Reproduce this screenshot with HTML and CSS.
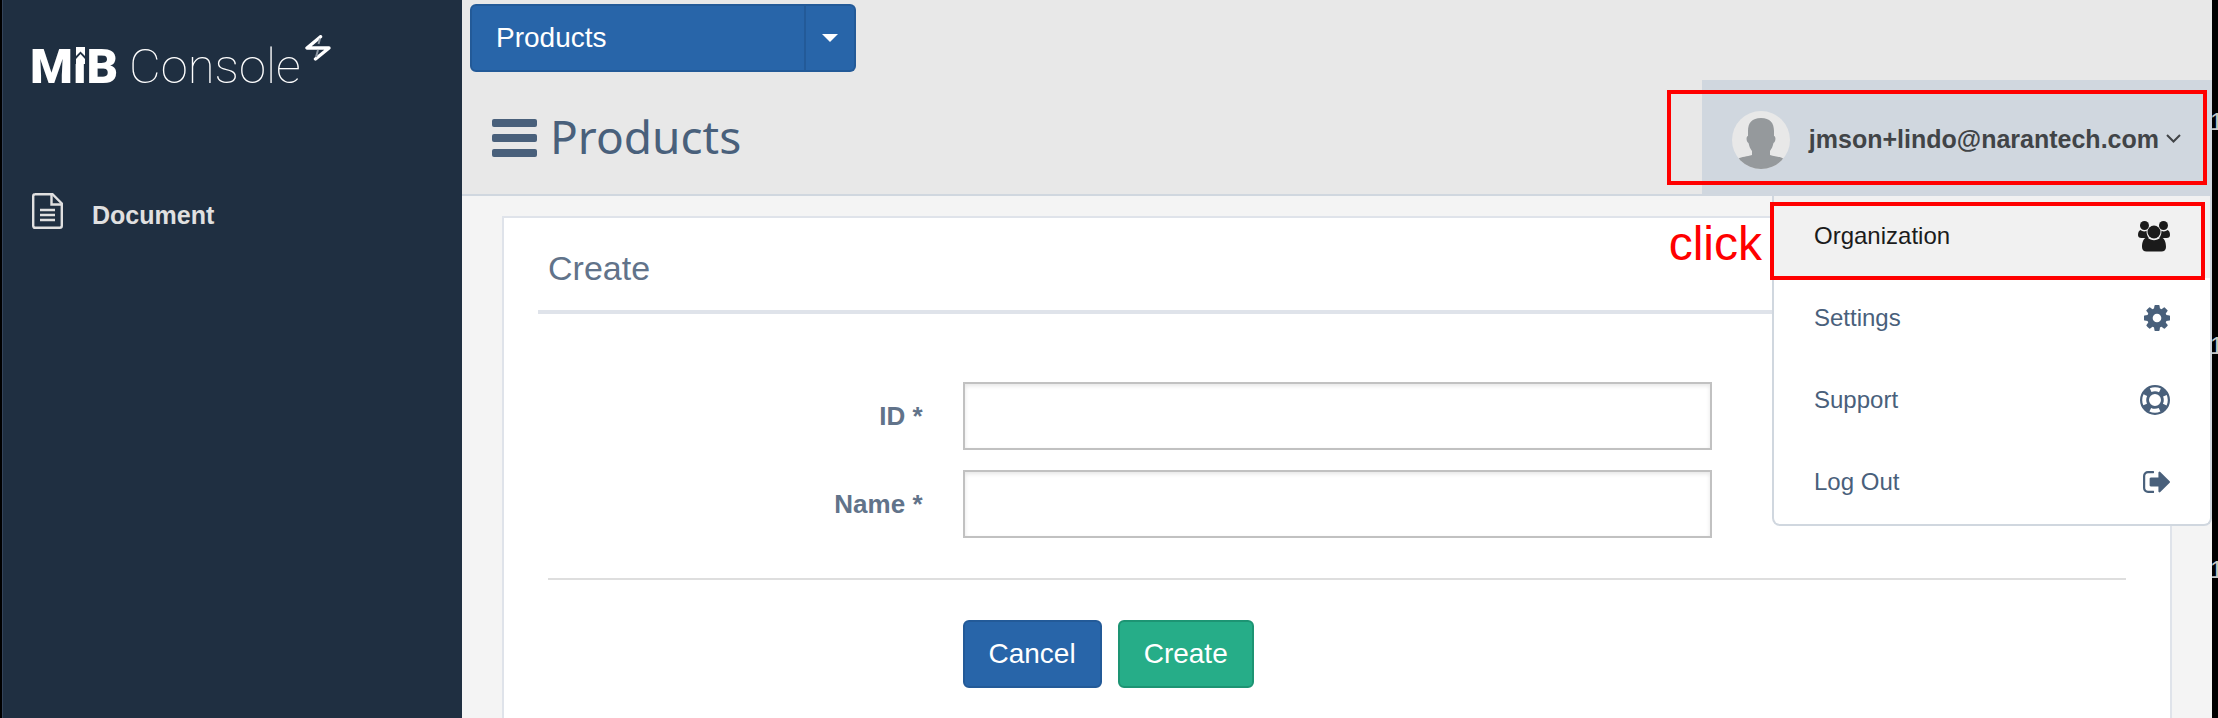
FILE: index.html
```html
<!DOCTYPE html>
<html lang="en">
<head>
<meta charset="utf-8">
<title>MiB Console</title>
<link rel="stylesheet" href="styles.css">
</head>
<body>
<div class="app">
  <aside class="sidebar">
    <a class="logo" href="#"><span class="logo-bold">MiB<svg class="logo-notch" viewBox="0 0 14 18"><path d="M0 0h14v18H0z" fill="#1f2f41"/><path d="M3 1h9v9L7.500 5.500 3 10zM7.500 8l4.500 5v5H3v-5z" fill="#fff"/></svg></span><span class="logo-thin">Console</span><svg class="logo-bolt" viewBox="0 0 26 26"><path d="M15.500 1.700 2 13H24L10.500 24" fill="none" stroke="#fff" stroke-width="3.400" stroke-linejoin="round" stroke-linecap="round"/><path d="M15 3.500 13.500 9M11 22l2-7" fill="none" stroke="#8d97a2" stroke-width="2"/></svg></a>
    <nav>
      <a class="nav-link" href="#"><svg class="doc-icon" viewBox="0 0 31 36"><g fill="none" stroke="#e0e0e0" stroke-width="2.400"><path d="M3 1.200h17.500l9.300 9.300v22.300q0 2-2 2H3.200q-2 0-2-2V3.200q0-2 2-2z"/><path d="M19.500 1v10.500H30"/><path d="M8 17h15M8 22h15M8 27h15"/></g></svg><span>Document</span></a>
    </nav>
  </aside>

  <main class="main">
    <header class="header">
      <div class="split">
        <button class="split-label" type="button">Products</button><button class="split-caret" type="button" aria-label="More"><svg viewBox="0 0 16 8"><path d="M0 0h16L8 8z" fill="#fff"/></svg></button>
      </div>
      <div class="title-row">
        <h1 class="title"><svg class="burger" viewBox="0 0 45 38"><g fill="#49607b"><rect y="0" width="45" height="8" rx="2"/><rect y="15" width="45" height="8" rx="2"/><rect y="30" width="45" height="8" rx="2"/></g></svg><span>Products</span></h1>
        <div class="user">
          <button class="user-button" type="button">
            <svg class="avatar" viewBox="0 0 58 58"><defs><clipPath id="face"><circle cx="29" cy="29" r="29"/></clipPath></defs><g clip-path="url(#face)"><rect width="58" height="58" fill="#e8e8e8"/><path d="M29 7c9 0 13 5 13 13v5c2 0 2 6-.500 7-1 4-1.500 5-3.500 8v4c5 2 10 1 14 4v10H6V48c4-3 9-2 14-4v-4c-2-3-2.500-4-3.500-8-2.500-1-2.500-7-.500-7v-5c0-8 4-13 13-13z" fill="#95999c"/></g></svg>
            <span>jmson+lindo@narantech.com</span>
            <svg class="chevron" viewBox="0 0 15 9"><path d="M1 1l6.500 6.500L14 1" fill="none" stroke="#414447" stroke-width="2"/></svg>
          </button>
          <span class="mark mark-user"></span>
          <div class="menu">
            <a class="menu-item active" href="#">Organization<svg class="i-users" viewBox="0 0 32 31"><g fill="#1b1b1b"><circle cx="6.500" cy="4.500" r="4.500"/><circle cx="25.500" cy="4.500" r="4.500"/><path d="M2.500 9c1.500 1.500 4.500 2 6 .700 0 3 .8 5.300 2.300 7.300H3.500Q0 17 0 14q0-4 2.500-5zM29.500 9c-1.500 1.500-4.500 2-6 .700 0 3-.8 5.300-2.300 7.300h7.300q3.500 0 3.500-3 0-4-2.500-5z"/><circle cx="16" cy="11" r="6.500"/><path d="M9.500 16.500c4 3.500 9 3.500 13 0 4 0 5.500 5 5.500 9.500 0 3-2 4.500-4.500 4.500h-15C6 30.500 4 29 4 26c0-4.500 1.500-9.500 5.500-9.500z"/></g></svg></a>
            <a class="menu-item" href="#">Settings<svg class="i-cog" viewBox="128 128 1536 1536"><path fill="#49607b" d="M1152 896q0-106-75-181t-181-75-181 75-75 181 75 181 181 75 181-75 75-181zm512-109v222q0 12-8 23t-20 13l-185 28q-19 54-39 91 35 50 107 138 10 12 10 25t-9 23q-27 37-99 108t-94 71q-12 0-26-9l-138-108q-44 23-91 38-16 136-29 186-7 28-36 28h-222q-14 0-24.500-8.500t-11.500-21.500l-28-184q-49-16-90-37l-141 107q-10 9-25 9-14 0-25-11-126-114-165-168-7-10-7-23 0-12 8-23 15-21 51-66.500t54-70.500q-27-50-41-99l-183-27q-13-2-21-12.500t-8-23.500v-222q0-12 8-23t19-13l186-28q14-46 39-92-40-57-107-138-10-12-10-24 0-10 9-23 26-36 98.500-107.500t94.500-71.500q13 0 26 10l138 107q44-23 91-38 16-136 29-186 7-28 36-28h222q14 0 24.500 8.500t11.500 21.500l28 184q49 16 90 37l142-107q9-9 24-9 13 0 25 10 129 119 165 170 7 8 7 22 0 12-8 23-15 21-51 66.500t-54 70.500q26 50 41 98l183 28q13 2 21 12.500t8 23.500z"/></svg></a>
            <a class="menu-item" href="#">Support<svg class="i-ring" viewBox="0 0 30 30"><g fill="none"><circle cx="15" cy="15" r="10.500" stroke="#49607b" stroke-width="9"/><circle cx="15" cy="15" r="10.800" stroke="#fff" stroke-width="4" stroke-dasharray="9.600 7.365" stroke-dashoffset="4.800"/></g></svg></a>
            <a class="menu-item" href="#">Log Out<svg class="i-out" viewBox="64 256 1568 1280"><path fill="#49607b" d="M704 1440q0 4 1 20t.5 26.500-3 23.500-10 19.500-20.500 6.500h-320q-119 0-203.500-84.500t-84.500-203.500v-704q0-119 84.500-203.500t203.500-84.500h320q13 0 22.500 9.500t9.500 22.500q0 4 1 20t.5 26.500-3 23.500-10 19.500-20.500 6.500h-320q-66 0-113 47t-47 113v704q0 66 47 113t113 47h312l11.500 1 11.500 3 8 5.500 7 9 2 13.500zm928-544q0 26-19 45l-544 544q-19 19-45 19t-45-19-19-45v-288h-448q-26 0-45-19t-19-45v-384q0-26 19-45t45-19h448v-288q0-26 19-45t45-19 45 19l544 544q19 19 19 45z"/></svg></a>
            <span class="mark mark-item"></span>
            <span class="click">click</span>
          </div>
        </div>
      </div>
    </header>

    <section class="card">
      <h2 class="card-title">Create</h2>
      <form class="form">
        <div class="row"><label for="id">ID *</label><input id="id" type="text"></div>
        <div class="row"><label for="name">Name *</label><input id="name" type="text"></div>
        <div class="actions"><button class="btn" type="button">Cancel</button><button class="btn btn-green" type="button">Create</button></div>
      </form>
    </section>
  </main>

  <div class="edge"><span>1</span><span>1</span><span>1</span></div>
</div>
</body>
</html>
```
FILE: styles.css
```css
* { box-sizing: border-box; }
body {
  margin: 0;
  background: #000;
  font-family: "Liberation Sans", Arial, sans-serif;
  font-size: 24px;
  color: #61738a;
}
a { color: inherit; text-decoration: none; }
button { font: inherit; cursor: pointer; }
svg { display: block; flex: none; }
h1, h2 { margin: 0; font-weight: 400; }

.app { display: flex; min-height: 100vh; padding-left: 2px; overflow: hidden; }

.sidebar {
  flex: none;
  width: 460px;
  padding: 35px 29px;
  background: #1f2f41;
  border-left: 1px solid #34445a;
}
.logo {
  display: flex;
  align-items: flex-start;
  height: 64px;
  color: #fff;
  font-family: Roboto, sans-serif;
  font-size: 49px;
  line-height: 64px;
}
.logo-bold { position: relative; margin-left: -2px; font-weight: 900; }
.logo-notch { position: absolute; left: 43px; top: 11px; width: 14px; height: 18px; }
.logo-thin { margin-left: 11px; font-weight: 100; }
.logo-bolt { width: 26px; height: 26px; margin-left: 4px; }

nav { margin-top: 94px; }
.nav-link {
  display: flex;
  gap: 29px;
  color: #e0e0e0;
  font-size: 25px;
  font-weight: 700;
  line-height: 44px;
}
.doc-icon { width: 31px; height: 36px; }

.main { flex: 1; min-width: 0; background: #f4f4f4; }
.header { padding-top: 4px; background: #e8e8e8; border-bottom: 2px solid #d0d7df; }

.split { display: flex; width: 386px; height: 68px; margin-left: 8px; }
.split button, .btn {
  border: 2px solid #235a98;
  background: #2865a9;
  color: #fff;
  font-size: 28px;
}
.split .split-label { flex: 1; padding: 0 24px; text-align: left; border-radius: 6px 0 0 6px; }
.split .split-caret {
  display: grid;
  place-items: center;
  width: 50px;
  padding: 0;
  border-left: 0;
  border-radius: 0 6px 6px 0;
}
.split-caret svg { width: 16px; height: 8px; }

.title-row { display: flex; justify-content: space-between; margin-top: 8px; height: 114px; }
.title {
  display: flex;
  align-items: center;
  gap: 13px;
  height: 116px;
  padding-left: 30px;
  color: #49607b;
  font-family: "Noto Sans", sans-serif;
  font-size: 46px;
}
.title span { padding-bottom: 4px; }
.burger { width: 45px; height: 38px; }

.user { position: relative; height: 116px; background: #d0d7df; }
.user-button {
  display: flex;
  align-items: center;
  height: 116px;
  padding: 4px 31px 0 30px;
  border: 0;
  background: none;
  color: #414447;
  font-size: 25px;
  font-weight: 700;
}
.avatar { width: 58px; height: 58px; margin-right: 19px; }
.user-button span { padding-bottom: 2px; }
.chevron { width: 15px; height: 9px; margin: 0 0 4px 7px; }

.mark { position: absolute; border: 4px solid #f00; pointer-events: none; }
.mark-user { left: -35px; right: 5px; top: 10px; height: 95px; }
.mark-item { left: -4px; right: 5px; top: 6px; height: 78px; }
.click {
  position: absolute;
  right: 100%;
  top: 20px;
  margin-right: 12px;
  color: #f00;
  font-size: 48px;
  line-height: 56px;
}

.menu {
  position: absolute;
  z-index: 2;
  top: 100%;
  right: 0;
  width: 440px;
  background: #fff;
  border: 2px solid #d0d7df;
  border-top: 0;
  border-radius: 0 0 8px 8px;
}
.menu-item {
  display: flex;
  align-items: center;
  justify-content: space-between;
  height: 82px;
  padding: 0 40px 2px;
  color: #49607b;
}
.menu-item.active { background: #f1f1f1; color: #1b1b1b; }
.i-users { width: 32px; height: 31px; }
.i-cog { width: 26px; height: 26px; }
.i-ring { width: 30px; height: 30px; }
.i-out { width: 27px; height: 22px; }

.card {
  min-height: 502px;
  margin: 20px 40px 0;
  padding: 0 34px;
  background: #fff;
  border: 2px solid #dfe3ea;
  border-bottom: 0;
}
.card-title {
  height: 96px;
  padding: 0 10px;
  border-bottom: 4px solid #dfe3ea;
  font-size: 34px;
  line-height: 100px;
}
.form { margin: 68px 10px 0; }
.row {
  display: grid;
  grid-template-columns: 1fr 2fr 1fr;
  align-items: center;
  margin-bottom: 20px;
}
.row label { padding-right: 20px; text-align: right; font-size: 26px; font-weight: 700; }
.row input {
  height: 68px;
  margin: 0 20px;
  padding: 0 24px;
  border: 2px solid #c1c1c1;
  background: #fff;
  box-shadow: inset 0 2px 4px rgba(0, 0, 0, 0.1);
  font: inherit;
}
.actions {
  display: flex;
  gap: 16px;
  margin-top: 40px;
  padding: 40px 0 28px calc(25% + 20px);
  border-top: 2px solid #dedede;
}
.btn { height: 68px; padding: 0 24px; border-radius: 6px; }
.btn-green { background: #26ad88; border-color: #1d9473; }

.edge {
  display: flex;
  flex-direction: column;
  gap: 196px;
  flex: none;
  width: 6px;
  padding-top: 108px;
  overflow: hidden;
  color: #c8c8c8;
  line-height: 28px;
  text-indent: -2px;
}
```
